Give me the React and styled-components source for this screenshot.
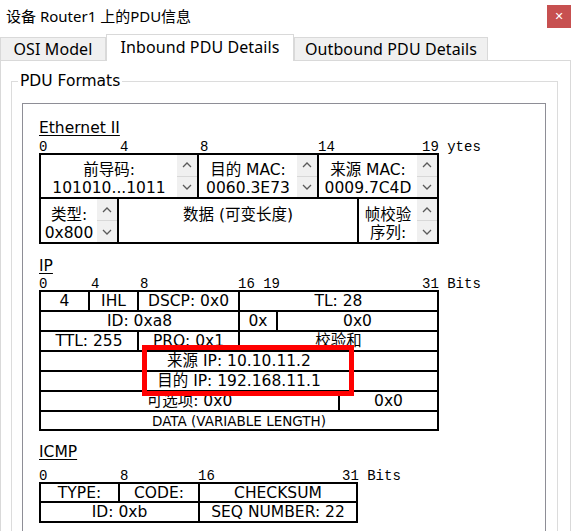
import styled, { createGlobalStyle } from "styled-components";

const GlobalStyle = createGlobalStyle`
  * { box-sizing: border-box; }
  html, body { margin: 0; padding: 0; background: #fff; }
  body {
    font-family: "DejaVu Sans", "Noto Sans CJK SC", sans-serif;
    color: #000;
  }
`;

const Window = styled.div`
  width: 571px;
  height: 531px;
  overflow: hidden;
  display: flex;
  flex-direction: column;
  background: #fff;
`;

const TitleBar = styled.div`
  flex: none;
  height: 34px;
  display: flex;
  justify-content: space-between;
  align-items: flex-start;
`;

const Title = styled.div`
  padding: 6px 0 0 6px;
  font-family: "Noto Sans", "Noto Sans CJK SC", sans-serif;
  font-size: 15px;
  line-height: 20px;
`;

const CloseButton = styled.div`
  margin-top: 5px;
  width: 24px;
  height: 23px;
  background: #c75050;
  color: #fff;
  display: flex;
  align-items: center;
  justify-content: center;
  font-family: "DejaVu Sans", sans-serif;
  font-size: 11px;
`;

const TabBar = styled.div`
  flex: none;
  height: 26px;
  display: flex;
  align-items: flex-end;
  position: relative;
  z-index: 1;
`;

const Tab = styled.div`
  width: ${(p) => p.$w}px;
  height: ${(p) => (p.$active ? 27 : 23)}px;
  margin-bottom: ${(p) => (p.$active ? -1 : 0)}px;
  padding-bottom: ${(p) => (p.$active ? 2 : 0)}px;
  background: ${(p) => (p.$active ? "#fff" : "#f0f0f0")};
  border: 1px solid #d9d9d9;
  border-bottom: none;
  display: flex;
  align-items: center;
  justify-content: center;
  font-family: "Noto Sans", sans-serif;
  font-size: 16px;
  letter-spacing: 0.1px;
  white-space: nowrap;
`;

const Panel = styled.div`
  flex: 1;
  min-height: 0;
  overflow: hidden;
  border: 1px solid #d9d9d9;
  border-bottom: none;
  padding: 11px 12px 0 10px;
`;

const GroupBox = styled.fieldset`
  margin: 0;
  min-width: 0;
  height: 520px;
  border: 1px solid #dcdcdc;
  padding: 13px 11px 0 10px;
`;

const Legend = styled.legend`
  padding: 0 2px;
  margin-left: -4px;
  font-size: 15.5px;
  line-height: 18px;
`;

const InnerBox = styled.div`
  height: 500px;
  border: 1px solid #8e8e96;
  padding: 15px 0 0 16px;
`;

const Section = styled.section`
  margin-top: ${(p) => p.$mt || 0}px;
`;

const SectionTitle = styled.div`
  font-size: 15.5px;
  line-height: 18px;
  text-decoration: underline;
  text-underline-offset: 2px;
`;

const Ruler = styled.div`
  display: flex;
  margin-top: ${(p) => p.$mt}px;
  height: 13px;
  font-family: "Liberation Mono", monospace;
  font-size: 14px;
  line-height: 15px;
  white-space: pre;
`;

const Mark = styled.span`
  flex: none;
  width: ${(p) => (p.$w ? `${p.$w}px` : "auto")};
`;

const Grid = styled.div`
  position: relative;
  width: ${(p) => p.$w}px;
  background: #000;
  padding: 2px;
  display: flex;
  flex-direction: column;
  gap: 2px;
`;

const Row = styled.div`
  display: flex;
  gap: 2px;
  height: ${(p) => p.$h}px;
`;

const Cell = styled.div`
  flex: ${(p) => (p.$w ? `0 0 ${p.$w}px` : "1 1 0")};
  min-width: 0;
  background: #fff;
  display: flex;
  align-items: center;
  justify-content: center;
  overflow: hidden;
  white-space: nowrap;
  font-size: ${(p) => p.$fs || 15.5}px;
  line-height: 18px;
`;

const SpinCell = styled.div`
  flex: ${(p) => (p.$w ? `0 0 ${p.$w}px` : "1 1 0")};
  min-width: 0;
  background: #fff;
  display: flex;
  overflow: hidden;
`;

const CellText = styled.div`
  flex: 1;
  min-width: 0;
  display: flex;
  flex-direction: column;
  align-items: center;
  padding-top: ${(p) => p.$pt}px;
  font-size: 15.5px;
  line-height: 18px;
  white-space: nowrap;
`;

const Spinner = styled.div`
  flex: 0 0 20px;
  display: flex;
  flex-direction: column;
  background: #f0f0f0;
`;

const SpinHalf = styled.div`
  flex: 1;
  display: flex;
  align-items: center;
  justify-content: center;
  border-top: ${(p) => (p.$down ? "1px solid #d8d8d8" : "none")};
`;

const Highlight = styled.div`
  position: absolute;
  left: 103px;
  top: 55px;
  width: 212px;
  height: 51px;
  border: 5px solid #f00;
`;

const Chevron = ({ down }) => (
  <svg width="10" height="6" viewBox="0 0 10 6">
    <polyline
      points={down ? "1,1 5,5 9,1" : "1,5 5,1 9,5"}
      fill="none"
      stroke="#5a5a5a"
      strokeWidth="1.3"
    />
  </svg>
);

const Spin = () => (
  <Spinner>
    <SpinHalf>
      <Chevron />
    </SpinHalf>
    <SpinHalf $down>
      <Chevron down />
    </SpinHalf>
  </Spinner>
);

const Field = ({ w, pt, lines }) => (
  <SpinCell $w={w}>
    <CellText $pt={pt}>
      {lines.map((l) => (
        <span key={l}>{l}</span>
      ))}
    </CellText>
    <Spin />
  </SpinCell>
);

const MarkRow = ({ mt, marks }) => (
  <Ruler $mt={mt}>
    {marks.map(([label, w]) => (
      <Mark key={label} $w={w}>
        {label}
      </Mark>
    ))}
  </Ruler>
);

export default function App() {
  return (
    <>
      <GlobalStyle />
      <Window>
        <TitleBar>
          <Title>设备 Router1 上的PDU信息</Title>
          <CloseButton>✕</CloseButton>
        </TitleBar>
        <TabBar>
          <Tab $w={106}>OSI Model</Tab>
          <Tab $w={188} $active>
            Inbound PDU Details
          </Tab>
          <Tab $w={194}>Outbound PDU Details</Tab>
        </TabBar>
        <Panel>
          <GroupBox>
            <Legend>PDU Formats</Legend>
            <InnerBox>
              {/* Ethernet II 帧 */}
              <Section>
                <SectionTitle>Ethernet II</SectionTitle>
                <MarkRow
                  mt={3}
                  marks={[
                    ["0", 81],
                    ["4", 80],
                    ["8", 118],
                    ["14", 104],
                    ["19 ytes"],
                  ]}
                />
                <Grid $w={400}>
                  <Row $h={42}>
                    <Field w={156} pt={6} lines={["前导码:", "101010...1011"]} />
                    <Field w={118} pt={6} lines={["目的 MAC:", "0060.3E73"]} />
                    <Field pt={6} lines={["来源 MAC:", "0009.7C4D"]} />
                  </Row>
                  <Row $h={43}>
                    <Field w={76} pt={7} lines={["类型:", "0x800"]} />
                    <SpinCell $w={238}>
                      <CellText $pt={7}>数据 (可变长度)</CellText>
                    </SpinCell>
                    <Field pt={7} lines={["帧校验", "序列:"]} />
                  </Row>
                </Grid>
              </Section>

              {/* IP 报头 */}
              <Section $mt={13}>
                <SectionTitle>IP</SectionTitle>
                <MarkRow
                  mt={2}
                  marks={[
                    ["0", 52],
                    ["4", 49],
                    ["8", 98],
                    ["16 19", 184],
                    ["31 Bits"],
                  ]}
                />
                <Grid $w={400}>
                  <Row $h={18}>
                    <Cell $w={47}>4</Cell>
                    <Cell $w={47}>IHL</Cell>
                    <Cell $w={99}>DSCP: 0x0</Cell>
                    <Cell>TL: 28</Cell>
                  </Row>
                  <Row $h={18}>
                    <Cell $w={197}>ID: 0xa8</Cell>
                    <Cell $w={36}>0x</Cell>
                    <Cell>0x0</Cell>
                  </Row>
                  <Row $h={18}>
                    <Cell $w={96}>TTL: 255</Cell>
                    <Cell $w={99}>PRO: 0x1</Cell>
                    <Cell>校验和</Cell>
                  </Row>
                  <Row $h={18}>
                    <Cell>来源 IP: 10.10.11.2</Cell>
                  </Row>
                  <Row $h={18}>
                    <Cell>目的 IP: 192.168.11.1</Cell>
                  </Row>
                  <Row $h={18}>
                    <Cell $w={297}>可选项: 0x0</Cell>
                    <Cell>0x0</Cell>
                  </Row>
                  <Row $h={17}>
                    <Cell $fs={13.5}>DATA (VARIABLE LENGTH)</Cell>
                  </Row>
                  <Highlight />
                </Grid>
              </Section>

              {/* ICMP 报文 */}
              <Section $mt={12}>
                <SectionTitle>ICMP</SectionTitle>
                <MarkRow
                  mt={8}
                  marks={[
                    ["0", 81],
                    ["8", 78],
                    ["16", 144],
                    ["31 Bits"],
                  ]}
                />
                <Grid $w={319}>
                  <Row $h={17}>
                    <Cell $w={77}>TYPE:</Cell>
                    <Cell $w={78}>CODE:</Cell>
                    <Cell>CHECKSUM</Cell>
                  </Row>
                  <Row $h={18}>
                    <Cell $w={157}>ID: 0xb</Cell>
                    <Cell>SEQ NUMBER: 22</Cell>
                  </Row>
                </Grid>
              </Section>
            </InnerBox>
          </GroupBox>
        </Panel>
      </Window>
    </>
  );
}
